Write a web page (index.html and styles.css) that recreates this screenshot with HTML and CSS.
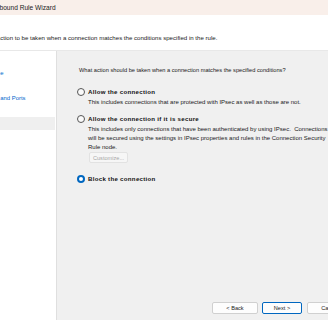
FILE: index.html
```html
<!DOCTYPE html>
<html lang="en">
<head>
  <meta charset="UTF-8">
  <title>New Inbound Rule Wizard</title>
  <link rel="stylesheet" href="styles.css">
</head>
<body>
  <div class="window">
    <div class="titlebar">New Inbound Rule Wizard</div>

    <div class="header">
      <p>Specify the action to be taken when a connection matches the conditions specified in the rule.</p>
    </div>

    <div class="main">
      <ul class="steps">
        <li class="done">Rule Type</li>
        <li class="done">Protocol and Ports</li>
        <li class="current"></li>
        <li></li>
        <li></li>
      </ul>

      <div class="content">
        <p class="question">What action should be taken when a connection matches the specified conditions?</p>

        <label class="option"><span class="radio"></span>Allow the connection</label>
        <p class="desc">This includes connections that are protected with IPsec as well as those are not.</p>

        <label class="option"><span class="radio"></span>Allow the connection if it is secure</label>
        <p class="desc">This includes only connections that have been authenticated by using IPsec.&nbsp; Connections<br>will be secured using the settings in IPsec properties and rules in the Connection Security<br>Rule node.</p>
        <button class="customize" disabled>Customize...</button>

        <label class="option"><span class="radio checked"></span>Block the connection</label>

        <div class="buttons">
          <button class="btn">&lt; Back</button>
          <button class="btn primary">Next &gt;</button>
          <button class="btn">Cancel</button>
        </div>
      </div>
    </div>
  </div>
</body>
</html>
```

FILE: styles.css
```css
html, body {
  margin: 0;
}

body {
  width: 328px;
  height: 320px;
  overflow: hidden;
  background: #f0f0f0;
  font-family: 'Liberation Sans', Arial, sans-serif;
  color: #000;
}

.window {
  width: 420px;
  margin-left: -40px;
}

.titlebar {
  height: 15px;
  line-height: 15px;
  padding-left: 19px;
  background: #f9efea;
  font-size: 6.6px;
  color: #1a1a1a;
}

.header {
  box-sizing: border-box;
  height: 35px;
  padding: 19px 0 0 5px;
  background: #fff;
}

.header p {
  margin: 0;
  font-size: 6.1px;
  line-height: 8px;
  color: #1a1a1a;
}

.main {
  display: flex;
  height: 269px;
  border-top: 1px solid #e8e8e8;
}

/* left step list */
.steps {
  width: 95px;
  margin: 0;
  padding: 16px 1px 0 0;
  list-style: none;
  background: #fff;
  border-right: 1px solid #dfdfdf;
}

.steps li {
  height: 13px;
  line-height: 13px;
  margin-bottom: 12px;
  padding-left: 17px;
  font-size: 5.9px;
}

.steps li.done {
  color: #0066cc;
}

.steps li.current {
  background: #efefef;
}

/* right pane */
.content {
  flex: 1;
  display: flex;
  flex-direction: column;
  align-items: flex-start;
  padding: 15px 0 6px 22px;
  font-size: 5.66px;
  line-height: 9px;
  color: #1a1a1a;
}

.question {
  margin: 0;
}

.option {
  display: flex;
  align-items: center;
  gap: 3px;
  height: 9px;
  margin: 12px 0 0 -2px;
  font-weight: 700;
  font-size: 6.1px;
  letter-spacing: 0.3px;
  color: #111;
}

.option + .desc + .option {
  margin-top: 7px;
}

.radio {
  box-sizing: border-box;
  width: 8px;
  height: 8px;
  border: 1px solid #555;
  border-radius: 50%;
  background: #fafafa;
}

.radio.checked {
  border: 2px solid #0067c0;
  background: #fff;
}

.desc {
  margin: 2px 0 0 9px;
  font-size: 6px;
}

.customize {
  box-sizing: border-box;
  width: 39px;
  height: 11px;
  margin: 0 0 0 10px;
  padding: 0;
  background: #f6f6f6;
  border: 1px solid #e2e2e2;
  border-radius: 2px;
  font-family: inherit;
  font-size: 5.6px;
  color: #a6a6a6;
}

.customize + .option {
  margin-top: 11px;
}

.buttons {
  display: flex;
  margin-top: auto;
  margin-left: 133px;
}

.btn {
  box-sizing: border-box;
  width: 46px;
  height: 12px;
  margin-right: 4px;
  padding: 0;
  background: #fdfdfd;
  border: 1px solid #d0d0d0;
  border-radius: 2px;
  font-family: inherit;
  font-size: 5.6px;
  color: #1a1a1a;
}

.btn.primary {
  width: 40px;
  margin-right: 5px;
  border-color: #0067c0;
}
```
